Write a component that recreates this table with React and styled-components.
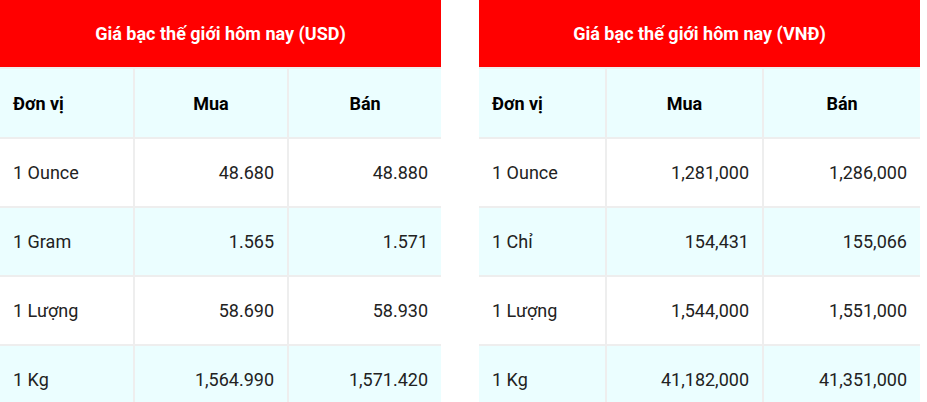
import styled, { createGlobalStyle } from 'styled-components';

const GlobalStyle = createGlobalStyle`
  html, body {
    margin: 0;
    padding: 0;
    background: #fff;
    font-family: Roboto, "Noto Sans", Arial, sans-serif;
  }
`;

const Page = styled.div`
  display: flex;
  gap: 38px;
  align-items: flex-start;
`;

const Table = styled.div`
  display: grid;
  grid-template-columns: ${({ cols }) => cols};
  grid-template-rows: 67px 68px;
  grid-auto-rows: 67px;
  gap: 2px;
  background: #eeeeee;
  width: 441px;
`;

const Title = styled.div`
  grid-column: 1 / -1;
  background: #ff0000;
  color: #fff;
  font-weight: 700;
  font-size: 18px;
  display: flex;
  align-items: center;
  justify-content: center;
`;

const Cell = styled.div`
  display: flex;
  align-items: center;
  justify-content: ${({ align }) => (align === 'right' ? 'flex-end' : align === 'center' ? 'center' : 'flex-start')};
  padding: 0 13px;
  background: ${({ shade }) => (shade ? '#ebfeff' : '#ffffff')};
  color: ${({ head }) => (head ? '#000' : '#222')};
  font-weight: ${({ head }) => (head ? 700 : 400)};
  font-size: 18px;
`;

const tables = [
  {
    title: 'Giá bạc thế giới hôm nay (USD)',
    cols: '133px 152px 152px',
    rows: [
      ['1 Ounce', '48.680', '48.880'],
      ['1 Gram', '1.565', '1.571'],
      ['1 Lượng', '58.690', '58.930'],
      ['1 Kg', '1,564.990', '1,571.420'],
    ],
  },
  {
    title: 'Giá bạc thế giới hôm nay (VNĐ)',
    cols: '126px 155px 156px',
    rows: [
      ['1 Ounce', '1,281,000', '1,286,000'],
      ['1 Chỉ', '154,431', '155,066'],
      ['1 Lượng', '1,544,000', '1,551,000'],
      ['1 Kg', '41,182,000', '41,351,000'],
    ],
  },
];

const PriceTable = ({ title, cols, rows }) => (
  <Table cols={cols}>
    <Title>{title}</Title>
    <Cell head shade>Đơn vị</Cell>
    <Cell head shade align="center">Mua</Cell>
    <Cell head shade align="center">Bán</Cell>
    {rows.map((row, i) =>
      row.map((val, j) => (
        <Cell key={`${i}-${j}`} shade={i % 2 === 1} align={j === 0 ? 'left' : 'right'}>
          {val}
        </Cell>
      ))
    )}
  </Table>
);

export default function App() {
  return (
    <>
      <GlobalStyle />
      <Page>
        {tables.map((t) => (
          <PriceTable key={t.title} {...t} />
        ))}
      </Page>
    </>
  );
}
